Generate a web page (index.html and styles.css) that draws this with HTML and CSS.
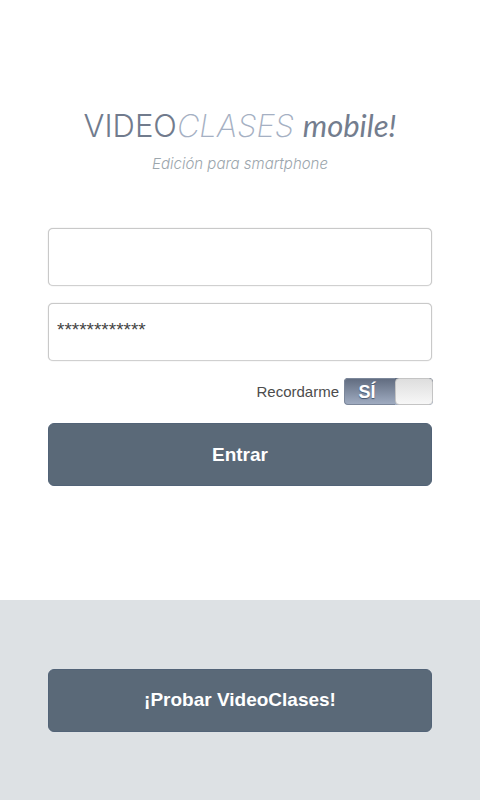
FILE: index.html
```html
<!DOCTYPE html>
<html lang="es">
<head>
<meta charset="utf-8">
<meta name="viewport" content="width=device-width, initial-scale=1">
<title>VideoClases mobile</title>
<link rel="stylesheet" href="styles.css">
</head>
<body>
<main class="login">
  <header class="brand">
    <h1 class="logo"><span class="logo-video">VIDEO</span><span class="logo-clases">CLASES</span> <span class="logo-mobile">mobile!</span></h1>
    <p class="tagline">Edición para smartphone</p>
  </header>
  <form class="form">
    <input class="field" type="text" aria-label="Usuario">
    <input class="field" type="text" aria-label="Contraseña" value="************">
    <label class="remember">
      <span>Recordarme</span>
      <span class="switch"><input class="switch-input" type="checkbox" checked><span class="switch-on">SÍ</span><span class="switch-knob"></span></span>
    </label>
    <button class="button" type="submit">Entrar</button>
  </form>
</main>
<footer class="trial">
  <button class="button" type="button">¡Probar VideoClases!</button>
</footer>
</body>
</html>
```

FILE: styles.css
```css
* { box-sizing: border-box; }

body {
  display: flex;
  flex-direction: column;
  min-height: 100vh;
  margin: 0;
  background: #fff;
  color: #4c4c4c;
  font-family: "Liberation Sans", Arial, sans-serif;
}

.login {
  flex: 1;
  padding: 107px 10% 0;
}

.brand {
  text-align: center;
  white-space: nowrap;
}

.logo {
  margin: 0;
  color: #717b8d;
  font-family: Inter, sans-serif;
  font-size: 31px;
  font-weight: 300;
  line-height: 36px;
}

.logo-clases {
  color: #a5b0c3;
  font-style: italic;
  font-weight: 200;
}

.logo-mobile {
  color: #737d8e;
  font-family: Lato, sans-serif;
  font-size: 31px;
  font-style: italic;
  font-weight: 400;
}

.tagline {
  margin: 10px 0 0;
  color: #9ca6ad;
  font-family: Inter, sans-serif;
  font-size: 15px;
  font-style: italic;
  font-weight: 300;
  line-height: 20px;
}

.form {
  display: flex;
  flex-direction: column;
  gap: 17px;
  margin-top: 54px;
}

.field {
  width: 100%;
  height: 58px;
  padding: 0 8px 4px;
  border: 1px solid #c9c9c9;
  border-bottom-color: #d0d0d0;
  border-radius: 5px;
  background: #fff;
  box-shadow: 0 0 1px #bbb;
  color: #444;
  font-family: inherit;
  font-size: 19px;
}

.remember {
  display: flex;
  align-items: center;
  align-self: flex-end;
  gap: 5px;
  margin-right: -1px;
  margin-bottom: 1px;
  font-size: 15px;
  line-height: 20px;
}

.switch {
  position: relative;
  display: flex;
  width: 89px;
  height: 27px;
  overflow: hidden;
  border-radius: 4px;
  background: linear-gradient(#5f6a7e, #a2aec3);
}

.switch-input {
  position: absolute;
  inset: 0;
  margin: 0;
  opacity: 0;
}

.switch-on {
  flex: 1;
  padding-right: 6px;
  border: 1px solid #7c879a;
  border-right: 0;
  border-radius: 4px 0 0 4px;
  color: #fff;
  font-size: 18px;
  font-weight: 700;
  line-height: 26px;
  text-align: center;
  text-shadow: 0 1px 1px #45556c;
}

.switch-knob {
  width: 38px;
  border: 1px solid #c4c4c4;
  border-radius: 4px;
  background: linear-gradient(#dedede, #f7f7f7);
}

.button {
  width: 100%;
  height: 63px;
  padding: 0;
  border: 1px solid #526377;
  border-radius: 6px;
  background: #5a6978;
  color: #fff;
  font-family: inherit;
  font-size: 19px;
  font-weight: 700;
}

.trial {
  height: 25vh;
  min-height: 132px;
  display: flex;
  align-items: center;
  padding: 0 10%;
  background: #dde1e4;
}
```
